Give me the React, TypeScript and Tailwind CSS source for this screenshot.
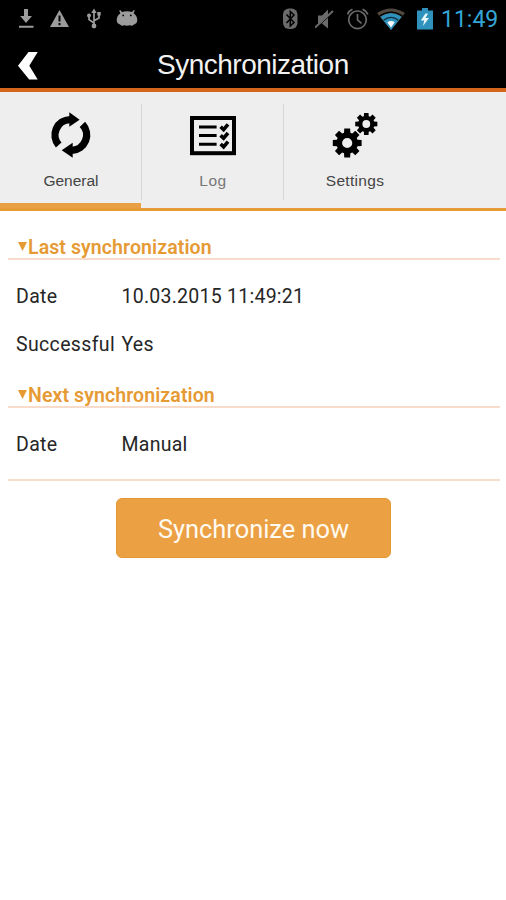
import type { ReactNode } from 'react';

type Tab = {
    label: string;
    icon: ReactNode;
    active?: boolean;
    labelClass: string;
};

function gearPath(cx: number, cy: number, outer: number, root: number) {
    const teeth = 8;
    const points: string[] = [];

    for (let i = 0; i < teeth; i++) {
        const mid = (i * 2 * Math.PI) / teeth;
        [
            [root, -0.3],
            [outer, -0.2],
            [outer, 0.2],
            [root, 0.3],
        ].forEach(([r, offset]) => {
            const x = cx + r * Math.cos(mid + offset);
            const y = cy + r * Math.sin(mid + offset);
            points.push(`${x.toFixed(2)} ${y.toFixed(2)}`);
        });
    }

    return `M${points.join('L')}Z`;
}

function circlePath(cx: number, cy: number, r: number) {
    return `M${cx - r} ${cy}a${r} ${r} 0 1 0 ${2 * r} 0a${r} ${r} 0 1 0 ${-2 * r} 0Z`;
}

function SyncIcon() {
    return (
        <svg className="h-12 w-12" viewBox="0 0 48 48">
            <g fill="none" stroke="#000" strokeWidth="7.4">
                <path d="M11.7 34A15.4 15.4 0 0 1 23 8.6" />
                <path d="M35.4 13.4A15.4 15.4 0 0 1 25 39.4" />
            </g>
            <path d="M22.3 1.2L32.6 8.8L22.3 15.8Z" />
            <path d="M25.7 31.8L14.7 39.3L25.7 46.8Z" />
        </svg>
    );
}

function LogIcon() {
    return (
        <svg className="h-12 w-12" viewBox="0 0 48 48" fill="none" stroke="#000">
            <rect x="3" y="7" width="42" height="35.2" strokeWidth="4" />
            <path d="M10 16H27.6M10 24.6H27.6M10 33.2H27.6" strokeWidth="3" />
            <path
                d="M31.6 15.8L34.6 18.6L39 13.4M31.6 24.4L34.6 27.2L39 22M31.6 33L34.6 35.8L39 30.6"
                strokeWidth="3.6"
            />
        </svg>
    );
}

function SettingsIcon() {
    return (
        <svg className="h-12 w-12" viewBox="0 0 48 48" fillRule="evenodd">
            <path d={gearPath(16.2, 32, 14.7, 10.8) + circlePath(16.2, 32, 5.1)} />
            <path d={gearPath(35.3, 13, 11.3, 8.2) + circlePath(35.3, 13, 3.9)} />
        </svg>
    );
}

function StatusBar() {
    return (
        <div className="flex h-[38px] items-center justify-between bg-black pr-2 pl-[18px]">
            <div className="flex items-center text-[#9c9c9c]">
                <svg className="h-6 w-4" viewBox="0 0 16 24" fill="currentColor">
                    <path d="M6 2h4v7h4L8 16 2.2 9H6zM1 18.8h14.5v2H1z" />
                </svg>
                <svg className="ml-4 h-6 w-5" viewBox="0 0 20 24">
                    <path d="M9.5 3L19 20H0z" fill="currentColor" />
                    <path d="M9.5 8.5v6M9.5 16v2.2" stroke="#000" strokeWidth="2" />
                </svg>
                <svg className="ml-4 h-6 w-4" viewBox="0 0 16 24" fill="none" stroke="currentColor" strokeWidth="1.7">
                    <path d="M8 4v14M8 16L3 12.6V8.5M8 13.8L13 11V7" />
                    <path d="M8 1.5L10.7 6H5.3zM11.3 5h3.4v3.4h-3.4z" fill="currentColor" stroke="none" />
                    <circle cx="3" cy="8.4" r="2" fill="currentColor" stroke="none" />
                    <circle cx="8" cy="19" r="2.4" fill="currentColor" stroke="none" />
                </svg>
                <svg className="ml-3.5 h-6 w-[22px]" viewBox="0 0 22 24">
                    <path
                        d="M4.2 3L6 5Q11 3.5 16 5l1.8-2 1 .7-1.2 2.5Q21.300 9 21.300 13q0 3.500-3.300 4.500-2 2-4 .8-3 .7-6 0-2 1.200-4-.8Q.7 16.500.7 13q0-4 3.700-6.800L3.200 3.700z"
                        fill="currentColor"
                    />
                    <circle cx="7.2" cy="8.4" r="0.9" />
                    <circle cx="14.8" cy="8.4" r="0.9" />
                </svg>
            </div>

            <div className="flex items-center text-[#6b6b6b]">
                <svg className="h-6 w-4" viewBox="0 0 16 24">
                    <rect x="0" y="1.5" width="14.5" height="20.5" rx="6" fill="currentColor" />
                    <path d="M3.5 7.5l7.5 8-3.7 3.5V4.5L11 8l-7.500 8" fill="none" stroke="#000" strokeWidth="1.5" />
                </svg>
                <svg className="ml-4 h-6 w-5" viewBox="0 0 20 24">
                    <path d="M3 8.500h4L13 2.500v19l-6-5H3z" fill="currentColor" />
                    <path d="M1 21.2L18.600 5.2" stroke="#000" strokeWidth="1" />
                    <path d="M0 20.5L18 4" stroke="currentColor" strokeWidth="2" />
                </svg>
                <svg className="ml-3 h-6 w-[22px]" viewBox="0 0 22 24" fill="none" stroke="currentColor" strokeWidth="1.7">
                    <circle cx="10.5" cy="12.8" r="8.8" />
                    <path d="M10.5 7v5.8l4 3.5M.5 7.5Q1.5 4 5.5 2.3M15.5 2.3Q19.5 4 20.8 7.5" />
                </svg>
                <svg className="ml-2 h-6 w-7" viewBox="0 0 28 24">
                    <path d="M0 6Q14-3 28 6L14 23z" fill="#51483f" />
                    <path d="M3.5 10Q14 2.5 24.5 10L14 23z" fill="#2f92bd" />
                    <path d="M2.8 8.9Q14 1.3 25.2 8.9" fill="none" stroke="#000" strokeWidth="1.3" />
                    <path d="M6.5 13.3Q14 7.5 21.5 13.3" fill="none" stroke="#0b2b3a" strokeWidth="1.4" />
                    <path d="M10.3 15.3Q14 12.7 17.7 15.3L14 20.5z" fill="#fff" />
                </svg>
                <svg className="ml-3 h-6 w-4" viewBox="0 0 16 24">
                    <path d="M5 1h6v2.5h5V22.5H0V3.5h5z" fill="#2f92bd" />
                    <path d="M8.5 6.5L3.8 13.5h3.4L6 19l6-8H8.5l2.5-4.5z" fill="#e8f6fc" />
                </svg>
                <span className="ml-2 w-[57px] pt-px text-right font-[Roboto] text-[23px] leading-none whitespace-nowrap text-[#34a6d6]">
                    11:49
                </span>
            </div>
        </div>
    );
}

const tabs: Tab[] = [
    { label: 'General', icon: <SyncIcon />, active: true, labelClass: 'text-[#444]' },
    { label: 'Log', icon: <LogIcon />, labelClass: 'tracking-[0.6px] text-[#777]' },
    { label: 'Settings', icon: <SettingsIcon />, labelClass: 'tracking-[0.3px] text-[#444]' },
];

function SectionTitle({ children }: { children: ReactNode }) {
    return (
        <h2 className="flex h-[27px] items-center border-b-2 border-[#f8dccb] pt-[5px] pl-2.5 font-[Roboto] text-[19.5px] leading-5 font-semibold tracking-[0.1px] text-[#e69a34]">
            <svg className="mr-px mb-0.5 h-2.5 w-[9px]" viewBox="0 0 9 10" fill="currentColor">
                <path d="M0 0h9L4.5 9z" />
            </svg>
            {children}
        </h2>
    );
}

function Row({ label, value }: { label: string; value: string }) {
    return (
        <div className="flex h-12 items-center pl-2 font-[Roboto] text-[19.5px] whitespace-nowrap text-[#262626]">
            <span className="w-[105.5px] tracking-[0.35px]">{label}</span>
            <span className="tracking-[0.25px]">{value}</span>
        </div>
    );
}

export default function App() {
    return (
        <div className="h-[900px] w-[506px] overflow-hidden bg-white">
            <StatusBar />

            <header className="flex h-[54px] items-center border-b-4 border-[#d4651b] bg-black pl-[18px]">
                <svg className="mt-[5px] h-7 w-5" viewBox="0 0 20 28" fill="#fff">
                    <path d="M10.5 0h9.2L11.3 13.8 19.7 27.5h-8.5L0 13.8z" />
                </svg>
                <h1 className="mt-[3px] ml-[119px] font-['Liberation_Sans',sans-serif] text-[28px] tracking-[-0.5px] whitespace-nowrap text-[#f2f2f2]">
                    Synchronization
                </h1>
            </header>

            <nav className="flex h-[119px] border-b-[3px] border-[#e79a38] bg-[#eee]">
                {tabs.map((tab) => (
                    <button
                        key={tab.label}
                        type="button"
                        className="relative flex w-[142px] flex-col items-center pt-[19px]"
                    >
                        {tab.icon}
                        <span
                            className={`mt-2.5 font-['Liberation_Sans',sans-serif] text-[15.5px] leading-6 ${tab.labelClass}`}
                        >
                            {tab.label}
                        </span>
                        {tab.label !== 'Settings' && (
                            <span className="absolute top-3 right-0 h-24 w-px bg-[#d6d6d6]" />
                        )}
                        {tab.active && (
                            <span className="absolute bottom-0 left-0 h-[5px] w-[141px] bg-[#e99f43]" />
                        )}
                    </button>
                ))}
            </nav>

            <main className="pt-[22px] pr-1.5 pl-2">
                <SectionTitle>Last synchronization</SectionTitle>
                <div className="pt-[13px] pb-[12px]">
                    <Row label="Date" value="10.03.2015 11:49:21" />
                    <Row label="Successful" value="Yes" />
                </div>
                <SectionTitle>Next synchronization</SectionTitle>
                <div className="border-b-2 border-[#f8dccb] pt-[13px] pb-[10px]">
                    <Row label="Date" value="Manual" />
                </div>
                <button
                    type="button"
                    className="mt-[17px] ml-[108px] flex h-[60px] w-[275px] items-center justify-center rounded-md border border-[#e5982d] bg-[#eca044] pt-0.5 font-[Roboto] text-[25.4px] text-[#fffaf0]"
                >
                    Synchronize now
                </button>
            </main>
        </div>
    );
}
